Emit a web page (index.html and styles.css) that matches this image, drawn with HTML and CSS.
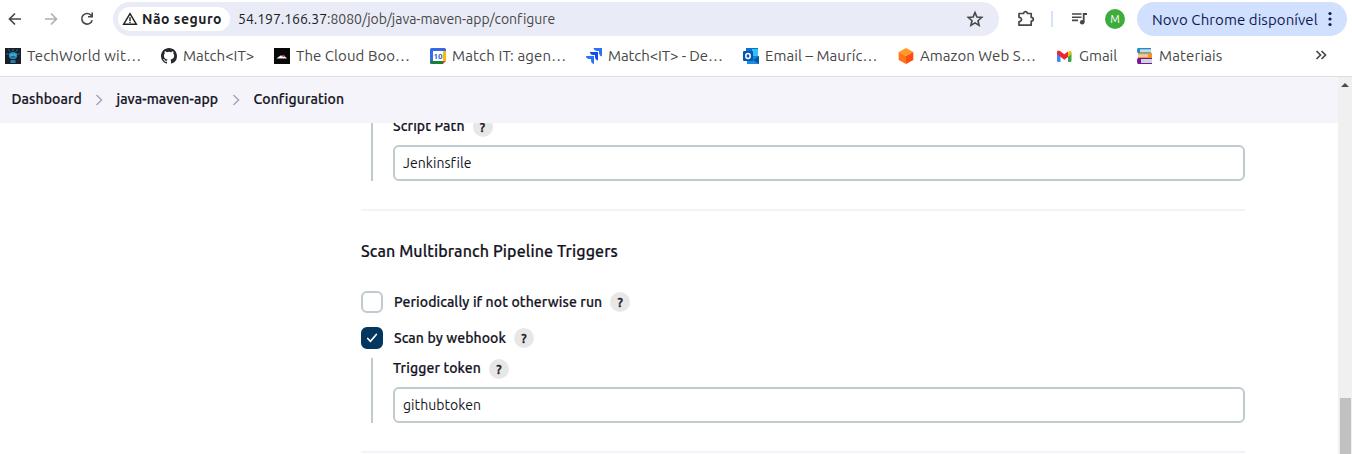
FILE: index.html
```
<!DOCTYPE html>
<html lang="pt-BR">
<head>
<meta charset="utf-8">
<title>java-maven-app Config</title>
<link rel="stylesheet" href="styles.css">
</head>
<body>
<header class="toolbar">
  <nav class="nav">
    <svg class="i20" viewBox="0 0 20 20"><path d="M16 10H5M10 4.500L4.500 10l5.500 5.500" fill="none" stroke="#474747" stroke-width="1.700"/></svg>
    <svg class="i20" viewBox="0 0 20 20"><path d="M4 10h11M10 4.500l5.500 5.500-5.500 5.500" fill="none" stroke="#b0b0b0" stroke-width="1.700"/></svg>
    <svg class="i20" viewBox="0 0 20 20"><path d="M15.200 11.200A5.300 5.300 0 1 1 14 6.200l1.300 1.400" fill="none" stroke="#474747" stroke-width="1.600"/><path d="M16 3.600v5h-5V7h3.400V3.600z" fill="#474747"/></svg>
  </nav>
  <div class="omnibox">
    <div class="chip"><svg class="warn" viewBox="0 0 16 16"><path d="M8 2.700L14.300 13.200H1.700z" fill="none" stroke="#202124" stroke-width="1.500"/><path d="M8 6.300v3.600M8 10.700v1.400" stroke="#202124" stroke-width="1.400"/></svg><b class="insecure">Não seguro</b></div>
    <span class="url"><span class="host">54.197.166.37</span>:8080/job/java-maven-app/configure</span>
    <svg class="i20 star" viewBox="0 0 20 20"><path d="M10 3.600l1.900 4.500 4.800.4-3.700 3.200 1.100 4.700-4.100-2.500-4.100 2.500L7 11.700 3.300 8.500l4.800-.4z" fill="none" stroke="#474747" stroke-width="1.600"/></svg>
  </div>
  <svg class="i20 puzzle" viewBox="0 0 20 20"><path d="M3 4.500h4.600C7.600 2 11.400 2 11.400 4.500H15.200V8.400C18 8.400 18 12 15.200 12V16.200H3V12.700C6.300 12.700 6.300 8.300 3 8.300z" fill="none" stroke="#474747" stroke-width="1.700" stroke-linejoin="round"/></svg>
  <span class="divider"></span>
  <svg class="i20 media" viewBox="0 0 20 20"><path d="M2 5h9.500M2 8.200h9.500M2 11.400h6" stroke="#474747" stroke-width="1.600"/><path d="M13.700 13V5H17" fill="none" stroke="#474747" stroke-width="1.800"/><circle cx="12.200" cy="13.200" r="2.300" fill="#474747"/></svg>
  <span class="avatar">M</span>
  <div class="update"><span class="update-text">Novo Chrome disponível</span><svg class="dots" viewBox="0 0 4 16"><circle cx="2" cy="2.500" r="1.600"/><circle cx="2" cy="8" r="1.600"/><circle cx="2" cy="13.500" r="1.600"/></svg></div>
</header>

<div class="bookmarks">
  <span class="bm w156"><svg class="i16" viewBox="0 0 16 16"><path fill="#1b1f2b" d="M0 0h16v16H0z"/><path d="M8 1v2M3.500 1.500l1.500 2M12.500 1.500l-1.500 2M1.500 6h2M12.500 6h2" stroke="#267da8"/><path fill="#2a91c3" d="M4 5.500Q8 2.500 12 5.500V9l-2 2H6L4 9z"/><path fill="#65cdf1" d="M5.500 6.500h2v1h-2zM8.500 6.500h2v1h-2z"/><path fill="#15435e" d="M6 8.500h4v1H6z"/><path fill="#267da8" d="M5.500 12h5v3h-5z"/></svg><span class="wide">TechWorld wit…</span></span>
  <span class="bm w113"><svg class="i16" viewBox="0 0 16 16"><path fill="#24292f" d="M8 0C3.580 0 0 3.580 0 8c0 3.540 2.290 6.530 5.470 7.590.4.070.55-.17.55-.38v-1.490c-2.010.37-2.530-.49-2.690-.94-.09-.23-.48-.94-.82-1.130-.28-.15-.68-.52-.01-.53.63-.01 1.080.58 1.230.82.72 1.210 1.870.87 2.330.66.07-.52.28-.87.51-1.070-1.780-.2-3.640-.89-3.640-3.950 0-.87.31-1.590.82-2.150-.08-.2-.36-1.020.08-2.120 0 0 .67-.21 2.200.82a7.500 7.500 0 0 1 4 0c1.530-1.040 2.200-.82 2.200-.82.44 1.100.16 1.920.08 2.120.51.56.82 1.270.82 2.150 0 3.070-1.870 3.750-3.650 3.950.29.25.54.73.54 1.480v2.200c0 .21.150.46.550.38A8 8 0 0 0 16 8c0-4.420-3.580-8-8-8z"/></svg><span>Match&lt;IT&gt;</span></span>
  <span class="bm w156"><svg class="i16" viewBox="0 0 16 16"><path fill="#080808" d="M0 0h16v16H0z"/><path fill="#f4f4f4" d="M2.500 10.500l2-1.500 2-1.500 4 .5 1 1 1.500 1.500z"/><path fill="#e3323c" d="M8.500 7h2v2h-2z"/></svg><span class="mid">The Cloud Boo…</span></span>
  <span class="bm w156"><svg class="i16" viewBox="0 0 16 16"><path fill="#fff" d="M1 1h14v14H1z"/><path fill="#346be4" d="M0 1.500Q0 0 1.500 0h13Q16 0 16 1.500V3H3v10H0z"/><path fill="#fbbc04" d="M13 3h3v10h-3z"/><path fill="#188038" d="M0 13h13v3H1.500Q0 16 0 14.500z"/><path fill="#ea4335" d="M13 13h3l-3 3z"/><text x="8" y="11" class="cal">10</text></svg><span class="wide">Match IT: agen…</span></span>
  <span class="bm w157"><svg class="i16" viewBox="0 0 16 16"><path fill="#2872fa" d="M7.500 0H16v8.500q-3-.5-3-4V3h-1.500q-3.500 0-4-3z"/><path fill="#1549e5" d="M4 4h8v8.500Q9 12 9 8.500V7H7.500Q4 7 4 4z"/><path fill="#2872fa" d="M0 8h8v8Q5.200 15.500 5 12.500V11H3.500Q0 11 0 8z"/></svg><span class="jira">Match&lt;IT&gt; - De…</span></span>
  <span class="bm w155"><svg class="i16" viewBox="0 0 16 16"><path fill="#0a72ce" d="M3 0h12v13H3z"/><path fill="#31c4f3" d="M9 1h6v7H9z"/><path fill="#168de2" d="M4 9l12-1v8H4z"/><path fill="#0b55a5" d="M10 12l6-4v8z"/><rect y="3" width="10" height="10" rx="1" fill="#0755b5"/><ellipse cx="5" cy="8" rx="2.200" ry="2.500" fill="none" stroke="#fff" stroke-width="1.500"/></svg><span class="mid">Email – Mauríc…</span></span>
  <span class="bm w159"><svg class="i16" viewBox="0 0 16 16"><path fill="#ff9a24" d="M8 0l7.300 4L8 8 .7 4z"/><path fill="#ff7518" d="M.7 4L8 8v8L.7 12z"/><path fill="#ff4c13" d="M15.300 4L8 8v8l7.300-4z"/></svg><span class="mid">Amazon Web S…</span></span>
  <span class="bm w80"><svg class="i16" viewBox="0 0 16 16"><path fill="#4285f4" d="M0 5h3.500v9H1.500Q0 14 0 12.500z"/><path fill="#34a853" d="M11 5h3.500v7.500q0 1.500-1.500 1.500h-2z"/><path fill="#fbbc04" d="M11 4.500l1.500-1.500q2-1 2 1.500V6L11 9z"/><path fill="#ea2634" d="M0 4Q.5 1.500 3 3l4.300 3.300L11 3.500V9l-3.700 2.800L0 6z"/></svg><span>Gmail</span></span>
  <span class="bm last"><svg class="i16" viewBox="0 0 16 16"><path fill="#208bd1" d="M1 0h13v5H1Q0 5 0 2.500T1 0z"/><path fill="#c8dce5" d="M3 1.300h11v3H3z"/><path fill="#f7941d" d="M1 5h14v5H1z"/><path fill="#e0d0bc" d="M1 6.300h10v2.700H1z"/><path fill="#7a169b" d="M1 10h14v6H1q-1 0-1-3t1-3z"/><path fill="#ced7db" d="M4 11h11v4H4z"/></svg><span class="wide">Materiais</span></span>
  <svg class="more" viewBox="0 0 12 10"><path d="M1.500 1l4 4-4 4M6.500 1l4 4-4 4" fill="none" stroke="#474747" stroke-width="1.700"/></svg>
</div>

<div class="viewport">
  <main class="page">
    <nav class="crumbs">
      <span class="c1">Dashboard</span>
      <svg class="chev" viewBox="0 0 8 12"><path d="M1.500 1l5 5-5 5"/></svg>
      <span class="c2">java-maven-app</span>
      <svg class="chev" viewBox="0 0 8 12"><path d="M1.500 1l5 5-5 5"/></svg>
      <span class="c3">Configuration</span>
    </nav>
    <div class="clip">
      <form class="form">
        <section class="nested first">
          <div class="label"><span>Script Path</span><span class="help">?</span></div>
          <div class="input"><span>Jenkinsfile</span></div>
        </section>
        <hr class="rule">
        <h2 class="title">Scan Multibranch Pipeline Triggers</h2>
        <div class="check"><span class="box"></span><span>Periodically if not otherwise run</span><span class="help">?</span></div>
        <div class="check"><span class="box on"><svg class="tick" viewBox="0 0 12 12"><path d="M1.700 6.500l2.800 2.800L10.300 2.500" fill="none" stroke="#fff" stroke-width="1.700" stroke-linecap="round" stroke-linejoin="round"/></svg></span><span>Scan by webhook</span><span class="help">?</span></div>
        <section class="nested">
          <div class="label"><span>Trigger token</span><span class="help">?</span></div>
          <div class="input"><span>githubtoken</span></div>
        </section>
        <hr class="rule">
      </form>
    </div>
  </main>
  <aside class="scroll"><span class="arrow"></span><span class="thumb"></span></aside>
</div>
</body>
</html>
```
FILE: styles.css
```
* { box-sizing: border-box; }
body { margin: 0; width: 1352px; height: 454px; overflow: hidden; background: #fff; color: #14141f; font-family: Ubuntu, "Noto Sans", sans-serif; white-space: nowrap; font-variant-ligatures: none; }
svg { display: block; flex: none; }
.i20 { width: 20px; height: 20px; }
.i16 { width: 16px; height: 16px; }

.toolbar { display: flex; align-items: center; height: 38px; padding-left: 5px; }
.nav { display: flex; gap: 16px; width: 108px; }
.omnibox { display: flex; align-items: center; width: 886px; height: 34px; border-radius: 17px; background: #e9ecf6; padding: 0 14px 0 5px; }
.chip { display: flex; align-items: center; width: 112px; height: 24px; padding-left: 4px; border-radius: 12px; background: #fff; }
.warn { width: 16px; height: 16px; margin-right: 4px; }
.insecure { font-size: 14px; font-weight: 700; letter-spacing: .5px; color: #202124; }
.url { margin-left: 8px; font-size: 14px; letter-spacing: -.02px; color: #474747; }
.host { color: #202124; }
.star { margin-left: auto; }
.puzzle { margin-left: 17px; }
.divider { width: 2px; height: 16px; margin: 0 17px 0 15px; background: #d3e3fd; }
.avatar { width: 20px; height: 20px; margin: 0 12px 0 15px; border-radius: 50%; background: #3eac3c; color: #fff; font-size: 11px; line-height: 20px; text-align: center; }
.update { display: flex; align-items: center; width: 210px; height: 34px; padding-left: 15px; border-radius: 17px; background: #d1e0fe; color: #0d1b52; font-size: 15px; }
.update-text { width: 176px; letter-spacing: .08px; }
.dots { width: 4px; height: 16px; fill: #0d1b52; }

.bookmarks { display: flex; align-items: center; height: 39px; padding-left: 5px; padding-bottom: 4px; border-bottom: 1px solid #dcdfdf; color: #474747; font-size: 15px; }
.bm { display: flex; align-items: center; gap: 6px; }
.bm .i16 { margin-top: 2px; }
.w156 { width: 156px; } .w113 { width: 113px; } .w157 { width: 157px; } .w155 { width: 155px; } .w159 { width: 159px; } .w80 { width: 80px; }
.last { width: 178px; }
.wide { letter-spacing: .16px; }
.mid { letter-spacing: .06px; }
.jira { letter-spacing: -.1px; }
.cal { font: bold 8px Roboto, sans-serif; fill: #2b60d5; text-anchor: middle; }
.more { width: 12px; height: 10px; }

.viewport { display: flex; height: 377px; }
.page { width: 1338px; }
.crumbs { display: flex; align-items: center; position: relative; height: 46px; padding: 0 0 2px 11.500px; background: #f5f4fa; font-size: 14px; font-weight: 500; letter-spacing: .1px; -webkit-text-stroke: .2px; }
.chev { width: 8px; height: 12px; margin: 2px 14px 0 0; }
.chev path { fill: none; stroke: #a7a6bd; stroke-width: 1.500; }
.c1 { width: 83px; } .c2 { width: 115px; }
.clip { height: 331px; overflow: hidden; }
.form { width: 884px; margin-left: 361px; }
.nested { height: 65px; margin-left: 10px; padding-left: 20px; border-left: 2px solid #bfcbcf; }
.first { margin-top: -7px; }
.label { display: flex; align-items: center; gap: 8px; height: 20px; margin-bottom: 9px; font-size: 14px; font-weight: 500; letter-spacing: .12px; -webkit-text-stroke: .2px; }
.label .help { margin-top: 2px; }
.input { display: flex; align-items: center; height: 36px; padding-left: 8px; border: 2px solid #bfcbcf; border-radius: 6px; font-size: 14px; letter-spacing: .06px; }
.help { width: 20px; height: 20px; border-radius: 50%; background: #e7e7e7; font-size: 13px; font-weight: 500; line-height: 20px; text-align: center; -webkit-text-stroke: .35px; }
.rule { height: 2px; margin: 28px 0 0; border: 0; background: #f3f3f8; }
.title { margin: 28px 0 28px; font-size: 16px; font-weight: 500; line-height: 24px; letter-spacing: .12px; -webkit-text-stroke: .2px; }
.check { display: flex; align-items: center; height: 22px; margin-bottom: 14px; font-size: 14px; font-weight: 500; letter-spacing: .11px; -webkit-text-stroke: .2px; }
.check + .nested { margin-top: -5px; }
.check .help { margin-left: 8px; }
.box { display: grid; place-items: center; width: 22px; height: 22px; margin-right: 11px; border: 2px solid #bfcbcf; border-radius: 6px; }
.on { border-color: #04375f; background: #04375f; }
.tick { width: 12px; height: 12px; }

.scroll { display: flex; flex-direction: column; align-items: center; width: 14px; background: #f0f0f0; }
.arrow { width: 0; height: 0; margin-top: 6px; border: 4px solid transparent; border-top: 0; border-bottom-color: #4b4b4b; }
.thumb { width: 11px; height: 56px; margin-top: auto; background: #c1c1c1; }
```
